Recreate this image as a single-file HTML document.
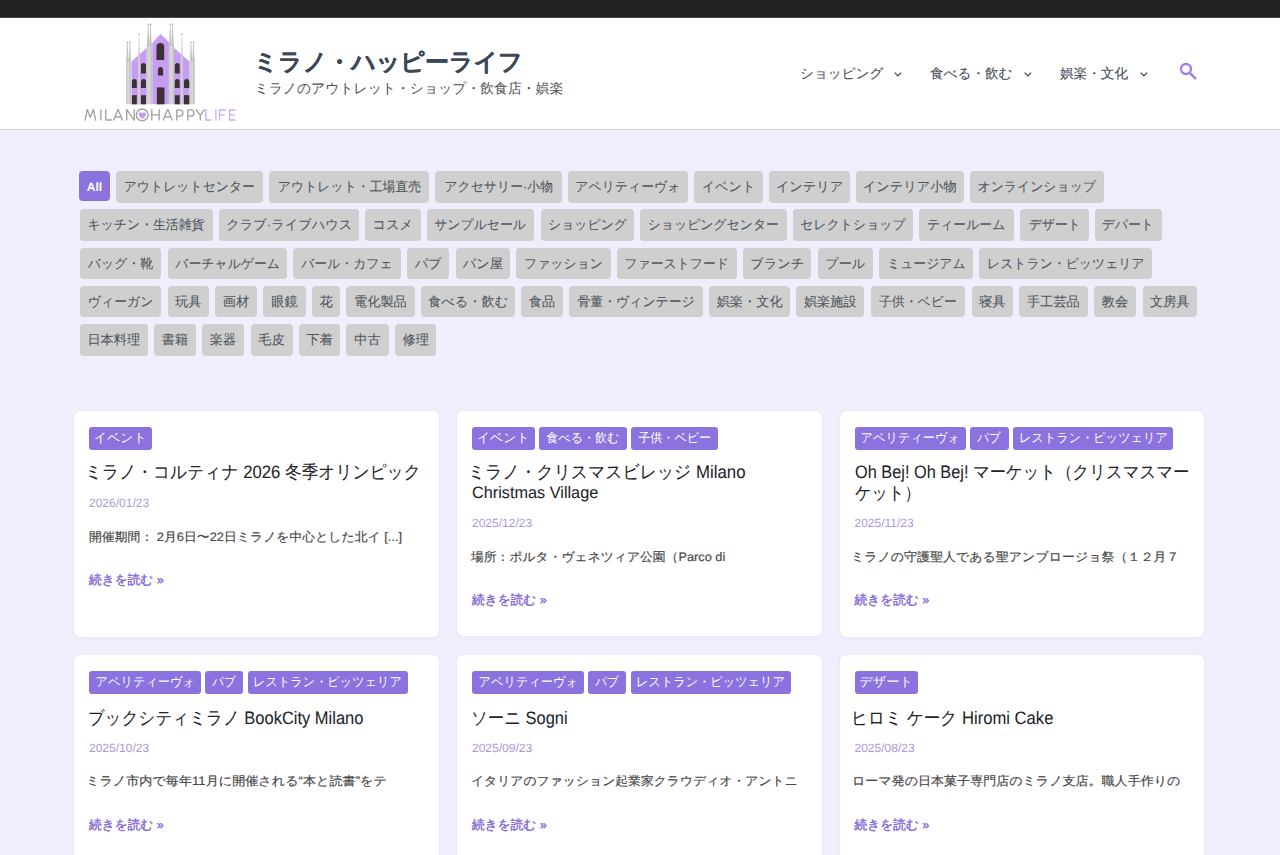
<!DOCTYPE html>
<html lang="ja"><head><meta charset="utf-8">
<style>
*{margin:0;padding:0;box-sizing:border-box}
html,body{width:1280px;height:855px;overflow:hidden}
body{text-rendering:geometricPrecision;font-family:"Liberation Sans",sans-serif;background:#f0eefd;position:relative;color:#333}
#topbar{position:absolute;left:0;top:0;width:1280px;height:17px;background:#222;z-index:2;border-bottom:0}
#tbe{position:absolute;left:0;top:17px;width:1280px;height:1px;background:#4a4a4a}
#tbsh{position:absolute;left:0;top:19px;width:1280px;height:1px;background:#f6f6f6}
#header{position:absolute;left:0;top:17px;width:1280px;height:113px;background:#fff;border-bottom:1px solid #cfcfd6}
#sitetitle{position:absolute;left:253.5px;top:46px;font-size:24.0px;font-weight:bold;color:#3a4859;white-space:nowrap;line-height:34px;-webkit-text-stroke:0.15px #3a4859}
#tagline{position:absolute;left:254.5px;top:78px;font-size:13.84px;color:#4b5057;-webkit-text-stroke:0px #444;white-space:nowrap;line-height:20px}
.nav{position:absolute;top:63.5px;font-size:13.6px;color:#454f59;-webkit-text-stroke:0.1px #454f59;white-space:nowrap;line-height:20px}
.t{position:absolute;height:31.7px;background:#cfcfcf;border-radius:4px;font-size:13.2px;color:#4f555b;-webkit-text-stroke:0.08px #4f555b;text-align:center;line-height:31px;white-space:nowrap;overflow:hidden}
.t.all{background:#8b72de;color:#fff;font-weight:bold;-webkit-text-stroke:0;height:30.5px;font-size:12px;line-height:32.5px}
.card{position:absolute;width:364.5px;background:#fff;border-radius:6px;box-shadow:0 0 1px rgba(70,50,140,0.12),0 1px 5px rgba(110,90,200,0.04)}
.ct{position:absolute;top:16px;height:23.2px;line-height:22.8px;background:#8b72de;color:#fff;font-size:12.8px;border-radius:3px;white-space:nowrap;text-align:center;overflow:hidden}
.title{position:absolute;left:15px;font-size:17px;color:#1d2327;-webkit-text-stroke:0.05px #1d2327;line-height:20px;white-space:nowrap}
.title span,.ex span{display:inline-block;transform-origin:0 50%}
.ct span{display:inline-block;transform-origin:50% 50%}
.sx{display:inline-block;transform:scaleX(0.975);transform-origin:50% 50%}
.date{position:absolute;left:15px;font-size:12px;color:#ab97dd;line-height:16px}
.ex{position:absolute;left:15px;font-size:12.3px;color:#474747;-webkit-text-stroke:0.18px #474747;line-height:20px;white-space:nowrap}
.more{position:absolute;left:15px;font-size:12.7px;color:#7f64d6;line-height:20px;-webkit-text-stroke:0.4px #7f64d6}
</style></head><body>
<div id="header"></div>
<div id="topbar"></div><div id="tbe"></div><div id="tbsh"></div>
<svg style="position:absolute;left:80px;top:18px" width="160" height="108" viewBox="80 18 160 108">
<defs><linearGradient id="sp" x1="0" x2="1"><stop offset="0" stop-color="#c9c9c9"/><stop offset="0.5" stop-color="#d9d9d9"/><stop offset="1" stop-color="#bdbdbd"/></linearGradient></defs>
<g fill="#c79cf3">
<polygon points="131.5,104.3 131.5,61.4 146.7,48 146.7,104.3"/>
<polygon points="152.3,104.3 152.3,43.1 160.5,34 169.2,42.4 169.2,104.3"/>
<polygon points="174,104.3 174,48 189.5,61.4 189.5,104.3"/>
</g>
<g fill="url(#sp)">
<polygon points="126.1,104.3 126.1,61.7 126.6,58 130.6,58 131.1,61.7 131.1,104.3"/>
<polygon fill="#c2c2c2" points="126.30000000000001,61 127.05000000000001,44.0 127.4,42.5 127.75,44.0 128.5,61"/>
<polygon fill="#c2c2c2" points="128.70000000000002,61 129.45000000000002,44.0 129.8,42.5 130.15,44.0 130.9,61"/>
<polygon points="146.5,104.3 146.5,47.2 147,44 151.7,44 152.2,47.2 152.2,104.3"/>
<polygon fill="#c2c2c2" points="147.0,46 147.85,25.7 148.2,24.2 148.54999999999998,25.7 149.39999999999998,46"/>
<polygon fill="#c2c2c2" points="149.3,46 150.15,25.7 150.5,24.2 150.85,25.7 151.7,46"/>
<polygon points="137.7,104.3 138.2,52 138.8,34.5 139.2,34.5 139.8,52 140.3,104.3"/>
<polygon points="168.6,104.3 168.6,47.2 169.1,44 173.8,44 174.3,47.2 174.3,104.3"/>
<polygon fill="#c2c2c2" points="169.10000000000002,46 169.95000000000002,25.7 170.3,24.2 170.65,25.7 171.5,46"/>
<polygon fill="#c2c2c2" points="171.4,46 172.25,25.7 172.6,24.2 172.95,25.7 173.79999999999998,46"/>
<polygon points="180.6,104.3 181.1,52 181.7,34.5 182.1,34.5 182.7,52 183.2,104.3"/>
<polygon points="189.6,104.3 189.6,61.7 190.1,58 194.3,58 194.8,61.7 194.8,104.3"/>
<polygon fill="#c2c2c2" points="189.9,61 190.65,44.0 191,42.5 191.35,44.0 192.1,61"/>
<polygon fill="#c2c2c2" points="192.3,61 193.05,44.0 193.4,42.5 193.75,44.0 194.5,61"/>
</g>
<g fill="#9a9a9a">
<circle cx="127.3" cy="42.6" r="0.75"/><circle cx="129.9" cy="42.6" r="0.75"/>
<circle cx="139" cy="34.3" r="0.75"/>
<circle cx="148.1" cy="24.3" r="0.75"/><circle cx="150.6" cy="24.3" r="0.75"/>
<circle cx="170.2" cy="24.3" r="0.75"/><circle cx="172.7" cy="24.3" r="0.75"/>
<circle cx="181.9" cy="34.3" r="0.75"/>
<circle cx="190.9" cy="42.6" r="0.75"/><circle cx="193.5" cy="42.6" r="0.75"/>
</g>
<g fill="#3b3036">
<path d="M156.5,60 V47 a3.85,4 0 0 1 7.7,0 V60 Z"/>
<path d="M157.9,75.5 V70 a2.6,3 0 0 1 5.2,0 V75.5 Z"/>
<rect x="156.9" y="87.4" width="7.6" height="16.9"/>
<path d="M141,73.4 V66 a2.5,3 0 0 1 5,0 V73.4 Z"/>
<path d="M141,88 V82 a2.5,3 0 0 1 5,0 V88 Z"/>
<rect x="141" y="95.2" width="5" height="9.1"/>
<path d="M131.9,88 V82 a2.45,3 0 0 1 4.9,0 V88 Z"/>
<rect x="131.9" y="95.2" width="4.9" height="9.1"/>
<path d="M174.8,73.4 V66 a2.45,3 0 0 1 4.9,0 V73.4 Z"/>
<path d="M174.8,88 V82 a2.45,3 0 0 1 4.9,0 V88 Z"/>
<rect x="174.8" y="95.2" width="4.9" height="9.1"/>
<path d="M184,88 V82 a2.65,3 0 0 1 5.3,0 V88 Z"/>
<rect x="184" y="95.2" width="5.3" height="9.1"/>
</g>
<g fill="none" stroke="#a2a2a2" stroke-width="1.35" stroke-linejoin="bevel">
<path d="M85,120.6 L87.2,109.3 L90.35,117.6 L93.5,109.3 L95.7,120.6"/>
<path d="M100.9,109.3 V120.6"/>
<path d="M105.7,109.3 V119.95 H111.9"/>
<path d="M113.5,120.6 L118,109.3 L122.5,120.6 M115,117 H121"/>
<path d="M126.7,120.6 V109.3 L134.3,120.6 V109.3"/>
<circle cx="142.2" cy="114.9" r="5.9"/>
<path d="M151.8,109.3 V120.6 M159.2,109.3 V120.6 M151.8,114.9 H159.2"/>
<path d="M163,120.6 L167.75,109.3 L172.5,120.6 M164.5,117 H171"/>
<path d="M176.8,120.6 V109.9 H179.8 a3.1,3.1 0 0 1 0,6.2 H176.8"/>
<path d="M187.8,120.6 V109.9 H190.8 a3.1,3.1 0 0 1 0,6.2 H187.8"/>
<path d="M196,109.3 L200.3,115.3 L204.6,109.3 M200.3,115.3 V120.6"/>
</g>
<path d="M142.3,118.9 C139.2,116.9 138.6,115.4 138.6,114.1 C138.6,112.3 141.3,111.5 142.3,113.4 C143.3,111.5 146,112.3 146,114.1 C146,115.4 145.4,116.9 142.3,118.9 Z" fill="#c49cf2"/>
<g fill="none" stroke="#c9abf2" stroke-width="1.35">
<path d="M205.9,109.3 V119.95 H211.3"/>
<path d="M215.9,109.3 V120.6"/>
<path d="M219.5,120.6 V109.95 H225.6 M219.5,114.9 H224.8"/>
<path d="M235.6,109.95 H229.5 V119.95 H235.6 M229.5,114.9 H234.8"/>
</g>
</svg>
<div id="sitetitle">ミラノ・ハッピーライフ</div>
<div id="tagline">ミラノのアウトレット・ショップ・飲食店・娯楽</div>
<div class="nav" style="left:800px">ショッピング</div>
<div class="nav" style="left:930px">食べる・飲む</div>
<div class="nav" style="left:1060px">娯楽・文化</div>
<svg style="position:absolute;left:893.3px;top:71px" width="10" height="7" viewBox="0 0 10 7"><path d="M1.6,1.6 L4.9,4.8 L8.2,1.6" fill="none" stroke="#4a525a" stroke-width="1.3"/></svg>
<svg style="position:absolute;left:1022.7px;top:71px" width="10" height="7" viewBox="0 0 10 7"><path d="M1.6,1.6 L4.9,4.8 L8.2,1.6" fill="none" stroke="#4a525a" stroke-width="1.3"/></svg>
<svg style="position:absolute;left:1138.7px;top:71px" width="10" height="7" viewBox="0 0 10 7"><path d="M1.6,1.6 L4.9,4.8 L8.2,1.6" fill="none" stroke="#4a525a" stroke-width="1.3"/></svg>
<svg style="position:absolute;left:1178px;top:61px" width="20" height="20" viewBox="0 0 20 20"><circle cx="8" cy="8" r="5" fill="none" stroke="#a57fe6" stroke-width="2.4"/><line x1="11.8" y1="11.8" x2="17.3" y2="17.3" stroke="#a57fe6" stroke-width="2.6" stroke-linecap="round"/></svg>
<div class="t all" style="left:79.2px;top:170.8px;width:30.5px">All</div>
<div class="t" style="left:115.75px;top:171px;width:147.25px"><span class="sx">アウトレットセンター</span></div>
<div class="t" style="left:269.25px;top:171px;width:159.5px"><span class="sx">アウトレット・工場直売</span></div>
<div class="t" style="left:435px;top:171px;width:126.75px"><span class="sx">アクセサリー·小物</span></div>
<div class="t" style="left:567.5px;top:171px;width:120.75px"><span class="sx">アペリティーヴォ</span></div>
<div class="t" style="left:694.25px;top:171px;width:68.75px">イベント</div>
<div class="t" style="left:769.25px;top:171px;width:80.75px">インテリア</div>
<div class="t" style="left:855.75px;top:171px;width:108.0px">インテリア小物</div>
<div class="t" style="left:970px;top:171px;width:133.75px"><span class="sx">オンラインショップ</span></div>
<div class="t" style="left:79.5px;top:209.25px;width:133.75px"><span class="sx">キッチン・生活雑貨</span></div>
<div class="t" style="left:219.25px;top:209.25px;width:140.0px">クラブ·ライブハウス</div>
<div class="t" style="left:365px;top:209.25px;width:55.5px">コスメ</div>
<div class="t" style="left:426.75px;top:209.25px;width:107.5px"><span class="sx">サンプルセール</span></div>
<div class="t" style="left:540.5px;top:209.25px;width:93.75px"><span class="sx">ショッピング</span></div>
<div class="t" style="left:640px;top:209.25px;width:147px"><span class="sx">ショッピングセンター</span></div>
<div class="t" style="left:793px;top:209.25px;width:120px"><span class="sx">セレクトショップ</span></div>
<div class="t" style="left:919.25px;top:209.25px;width:94.5px"><span class="sx">ティールーム</span></div>
<div class="t" style="left:1020px;top:209.25px;width:68.75px"><span class="sx">デザート</span></div>
<div class="t" style="left:1094.5px;top:209.25px;width:67.5px"><span class="sx">デパート</span></div>
<div class="t" style="left:79.5px;top:247.5px;width:81.25px"><span class="sx">バッグ・靴</span></div>
<div class="t" style="left:167.5px;top:247.5px;width:119.5px"><span class="sx">バーチャルゲーム</span></div>
<div class="t" style="left:293.25px;top:247.5px;width:107.25px"><span class="sx">バール・カフェ</span></div>
<div class="t" style="left:407px;top:247.5px;width:42.25px">パブ</div>
<div class="t" style="left:455.75px;top:247.5px;width:54.25px">パン屋</div>
<div class="t" style="left:516.25px;top:247.5px;width:94.25px"><span class="sx">ファッション</span></div>
<div class="t" style="left:617px;top:247.5px;width:119.75px"><span class="sx">ファーストフード</span></div>
<div class="t" style="left:743.25px;top:247.5px;width:68.0px">ブランチ</div>
<div class="t" style="left:817.5px;top:247.5px;width:55.5px">プール</div>
<div class="t" style="left:879.25px;top:247.5px;width:93.75px"><span class="sx">ミュージアム</span></div>
<div class="t" style="left:979.25px;top:247.5px;width:172.75px"><span class="sx">レストラン・ピッツェリア</span></div>
<div class="t" style="left:79.5px;top:285.75px;width:81.25px"><span class="sx">ヴィーガン</span></div>
<div class="t" style="left:167.5px;top:285.75px;width:41.25px">玩具</div>
<div class="t" style="left:215px;top:285.75px;width:42px">画材</div>
<div class="t" style="left:263.25px;top:285.75px;width:42.5px">眼鏡</div>
<div class="t" style="left:312px;top:285.75px;width:28px">花</div>
<div class="t" style="left:346.25px;top:285.75px;width:68.25px">電化製品</div>
<div class="t" style="left:421.25px;top:285.75px;width:93.75px">食べる・飲む</div>
<div class="t" style="left:520.75px;top:285.75px;width:42.5px">食品</div>
<div class="t" style="left:569.25px;top:285.75px;width:133.75px"><span class="sx">骨董・ヴィンテージ</span></div>
<div class="t" style="left:709.25px;top:285.75px;width:80.75px">娯楽・文化</div>
<div class="t" style="left:796.25px;top:285.75px;width:68.0px">娯楽施設</div>
<div class="t" style="left:870.75px;top:285.75px;width:94.25px"><span class="sx">子供・ベビー</span></div>
<div class="t" style="left:971.75px;top:285.75px;width:40.75px">寝具</div>
<div class="t" style="left:1019.25px;top:285.75px;width:68.25px">手工芸品</div>
<div class="t" style="left:1093.75px;top:285.75px;width:42.5px">教会</div>
<div class="t" style="left:1142.5px;top:285.75px;width:54.5px">文房具</div>
<div class="t" style="left:79.5px;top:324px;width:68.5px">日本料理</div>
<div class="t" style="left:154.25px;top:324px;width:41.25px">書籍</div>
<div class="t" style="left:201.75px;top:324px;width:42.5px">楽器</div>
<div class="t" style="left:250.5px;top:324px;width:42.0px">毛皮</div>
<div class="t" style="left:298.75px;top:324px;width:41.25px">下着</div>
<div class="t" style="left:346.25px;top:324px;width:42.5px">中古</div>
<div class="t" style="left:395px;top:324px;width:41.25px">修理</div>
<div class="card" style="left:74px;top:410.5px;height:226px"><div class="ct" style="left:15px;width:62.8px"><span style="transform:scaleX(1.0085637559101654)">イベント</span></div><div class="title" style="font-size:18px;left:11.399999999999967px;top:51.7px"><span style="transform:scaleX(0.9282253411885327)">ミラノ・コルティナ 2026 冬季オリンピック</span></div><div class="date" style="top:84.0px">2026/01/23</div><div class="ex" style="left:15.0px;top:116.0px"><span style="transform:scaleX(1.0454010691167905)">開催期間： 2月6日〜22日ミラノを中心とした北イ [...]</span></div><div class="more" style="top:159.3px">続きを読む »</div></div><div class="card" style="left:457px;top:410.5px;height:225.5px"><div class="ct" style="left:15px;width:63.1px"><span style="transform:scaleX(1.0085637559101654)">イベント</span></div><div class="ct" style="left:82.3px;width:87.5px"><span style="transform:scaleX(0.9421990106544901)">食べる・飲む</span></div><div class="ct" style="left:174.0px;width:87.2px"><span style="transform:scaleX(0.9408354825590973)">子供・ベビー</span></div><div class="title" style="font-size:18px;left:10.5px;top:51.7px"><span style="transform:scaleX(0.9341623296977493)">ミラノ・クリスマスビレッジ Milano</span></div><div class="title" style="font-size:16.5px;left:15.0px;top:72.2px"><span style="transform:scaleX(0.9857950819672131)">Christmas Village</span></div><div class="date" style="top:104.5px">2025/12/23</div><div class="ex" style="left:14.299999999999898px;top:136.5px"><span style="transform:scaleX(1.0403089934673728)">場所：ポルタ・ヴェネツィア公園（Parco di</span></div><div class="more" style="top:179.8px">続きを読む »</div></div><div class="card" style="left:839.5px;top:410.5px;height:226px"><div class="ct" style="left:15px;width:111.5px"><span style="transform:scaleX(0.952525343791997)">アペリティーヴォ</span></div><div class="ct" style="left:130.7px;width:38.7px"><span style="transform:scaleX(0.9048672463768115)">パブ</span></div><div class="ct" style="left:173.6px;width:160.3px"><span style="transform:scaleX(0.9483780918197012)">レストラン・ピッツェリア</span></div><div class="title" style="font-size:18px;left:15.199999999999728px;top:51.7px"><span style="transform:scaleX(0.9075630113708089)">Oh Bej! Oh Bej! マーケット（クリスマスマー</span></div><div class="title" style="font-size:18px;left:15.199999999999728px;top:72.2px"><span style="transform:scaleX(0.8964264152822502)">ケット）</span></div><div class="date" style="top:104.5px">2025/11/23</div><div class="ex" style="left:11.5px;top:136.5px"><span style="transform:scaleX(1.0551079106896002)">ミラノの守護聖人である聖アンブロージョ祭（１２月７</span></div><div class="more" style="top:179.8px">続きを読む »</div></div><div class="card" style="left:74px;top:655px;height:260px"><div class="ct" style="left:15px;width:111.5px"><span style="transform:scaleX(0.952525343791997)">アペリティーヴォ</span></div><div class="ct" style="left:130.7px;width:38.7px"><span style="transform:scaleX(0.9048672463768115)">パブ</span></div><div class="ct" style="left:173.6px;width:160.3px"><span style="transform:scaleX(0.9483780918197012)">レストラン・ピッツェリア</span></div><div class="title" style="font-size:18px;left:14.0px;top:52.7px"><span style="transform:scaleX(0.9153274803964874)">ブックシティミラノ BookCity Milano</span></div><div class="date" style="top:85.0px">2025/10/23</div><div class="ex" style="left:11.899999999999949px;top:115.5px"><span style="transform:scaleX(1.0655569836313121)">ミラノ市内で毎年11月に開催される“本と読書”をテ</span></div><div class="more" style="top:159.8px">続きを読む »</div></div><div class="card" style="left:457px;top:655px;height:260px"><div class="ct" style="left:15px;width:111.5px"><span style="transform:scaleX(0.952525343791997)">アペリティーヴォ</span></div><div class="ct" style="left:130.7px;width:38.7px"><span style="transform:scaleX(0.9048672463768115)">パブ</span></div><div class="ct" style="left:173.6px;width:160.3px"><span style="transform:scaleX(0.9483780918197012)">レストラン・ピッツェリア</span></div><div class="title" style="font-size:18px;left:14.300000000000272px;top:52.7px"><span style="transform:scaleX(0.9124494241931578)">ソーニ Sogni</span></div><div class="date" style="top:85.0px">2025/09/23</div><div class="ex" style="left:14.0px;top:115.5px"><span style="transform:scaleX(1.042365689022224)">イタリアのファッション起業家クラウディオ・アントニ</span></div><div class="more" style="top:159.8px">続きを読む »</div></div><div class="card" style="left:839.5px;top:655px;height:260px"><div class="ct" style="left:15px;width:63px"><span style="transform:scaleX(1.0315766511140048)">デザート</span></div><div class="title" style="font-size:18px;left:11.0px;top:52.7px"><span style="transform:scaleX(0.9237178807907064)">ヒロミ ケーク Hiromi Cake</span></div><div class="date" style="top:85.0px">2025/08/23</div><div class="ex" style="left:12.0px;top:115.5px"><span style="transform:scaleX(1.0591064984993341)">ローマ発の日本菓子専門店のミラノ支店。職人手作りの</span></div><div class="more" style="top:159.8px">続きを読む »</div></div>
</body></html>
